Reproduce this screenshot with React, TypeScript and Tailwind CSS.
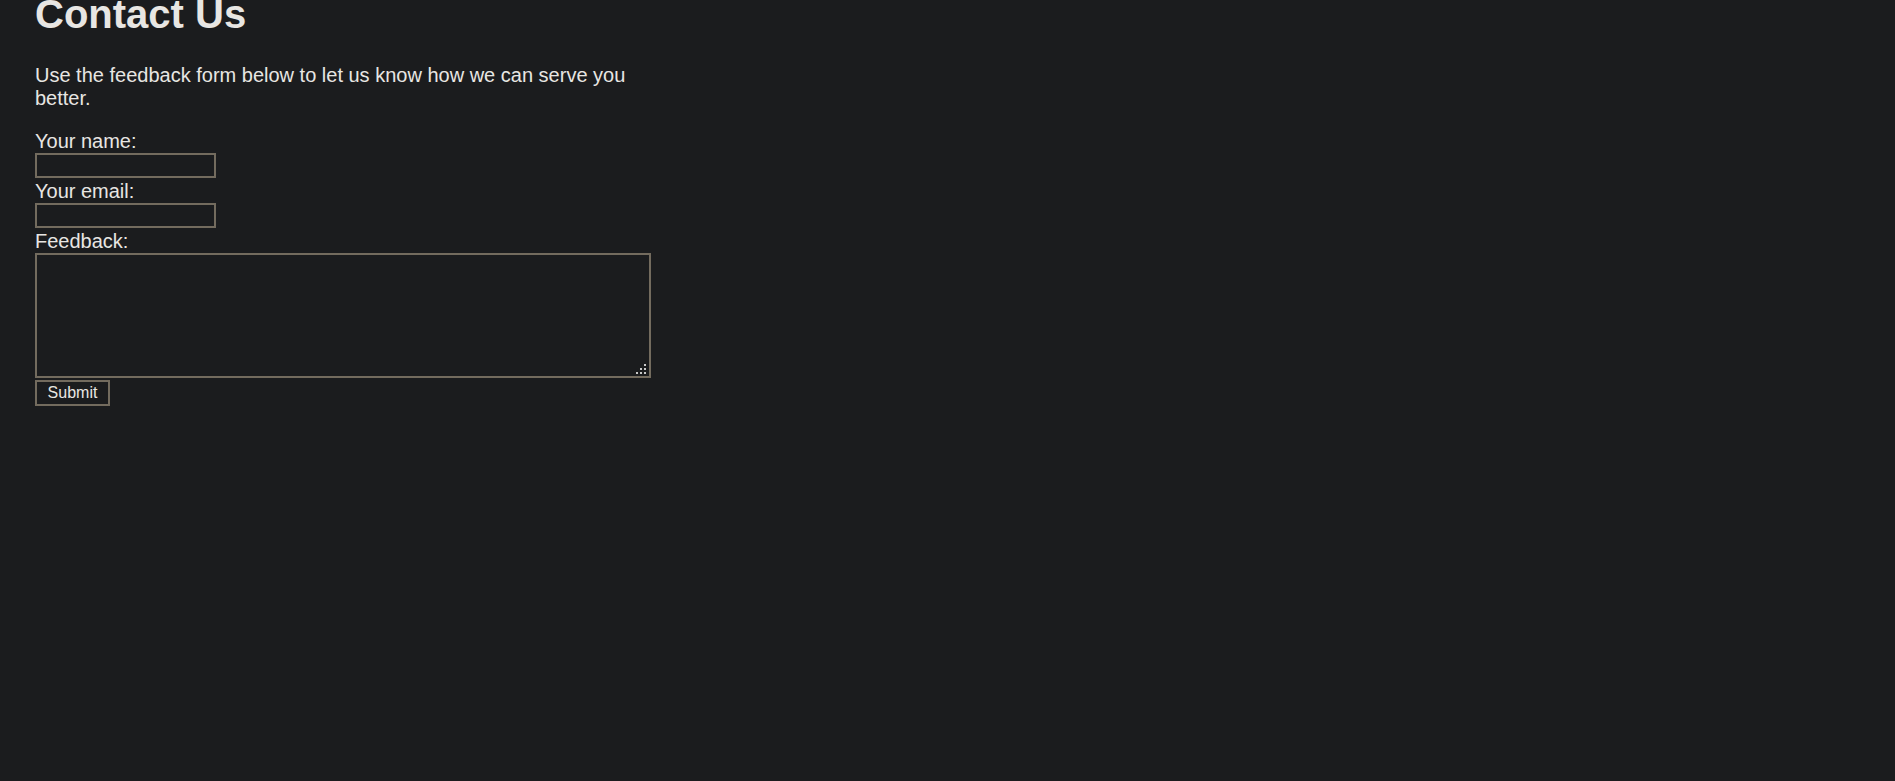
export default function App() {
  return (
    <div className="min-h-screen overflow-hidden bg-[#1b1c1e] pl-[35px] font-['Liberation_Sans',Arial,sans-serif] text-[#e8e6e3]">
      <h1 className="mt-[-9px] mb-[27px] text-[40px] font-bold leading-[46px]">Contact Us</h1>
      <p className="mb-[20px] w-[615px] text-[20px] leading-[23px]">
        Use the feedback form below to let us know how we can serve you better.
      </p>
      <form className="flex flex-col items-start text-[20px] leading-[23px]" onSubmit={(e) => e.preventDefault()}>
        <label htmlFor="name">Your name:</label>
        <input id="name" type="text" className="mb-[2px] h-[25px] w-[181px] border-2 border-[#736b5e] bg-transparent px-[2px] text-[13px] outline-none" />
        <label htmlFor="email">Your email:</label>
        <input id="email" type="email" className="mb-[2px] h-[25px] w-[181px] border-2 border-[#736b5e] bg-transparent px-[2px] text-[13px] outline-none" />
        <label htmlFor="feedback">Feedback:</label>
        <div className="relative">
          <textarea id="feedback" className="block h-[125px] w-[616px] resize-none border-2 border-[#736b5e] bg-transparent p-[2px] text-[13px] outline-none" />
          {/* resize grip */}
          <div className="pointer-events-none absolute right-[5px] bottom-[4px] grid grid-cols-3 gap-[2px]">
            <span />
            <span />
            <span className="h-[2px] w-[2px] bg-[#c8c8c8]" />
            <span />
            <span className="h-[2px] w-[2px] bg-[#c8c8c8]" />
            <span className="h-[2px] w-[2px] bg-[#c8c8c8]" />
            <span className="h-[2px] w-[2px] bg-[#c8c8c8]" />
            <span className="h-[2px] w-[2px] bg-[#c8c8c8]" />
            <span className="h-[2px] w-[2px] bg-[#c8c8c8]" />
          </div>
        </div>
        <button type="submit" className="mt-[2px] h-[26px] w-[75px] border-2 border-[#736b5e] bg-[#1b1c1e] text-[16px] leading-none text-[#e8e6e3]">
          Submit
        </button>
      </form>
    </div>
  )
}
